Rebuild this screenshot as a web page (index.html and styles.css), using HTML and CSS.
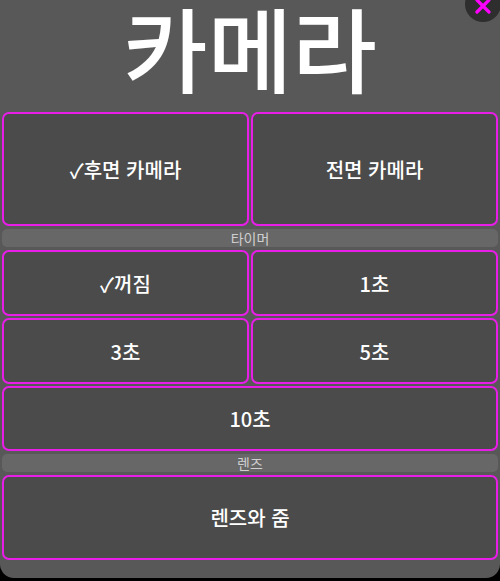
FILE: index.html
```html
<!DOCTYPE html>
<html lang="ko">
<head>
<meta charset="utf-8">
<link rel="stylesheet" href="styles.css">
</head>
<body>
<div class="panel">
  <div class="title">카메라</div>
  <button class="close" aria-label="닫기">
    <svg viewBox="0 0 16 16" width="16" height="16"><path d="M2 2 L14 14 M14 2 L2 14" stroke="#ff00ff" stroke-width="3.2" stroke-linecap="round" fill="none"/></svg>
  </button>
  <div class="row two tall">
    <div class="btn">✓후면 카메라</div>
    <div class="btn">전면 카메라</div>
  </div>
  <div class="header">타이머</div>
  <div class="timer">
    <div class="btn">✓꺼짐</div>
    <div class="btn">1초</div>
    <div class="btn">3초</div>
    <div class="btn">5초</div>
    <div class="btn wide">10초</div>
  </div>
  <div class="header">렌즈</div>
  <div class="btn lens">렌즈와 줌</div>
</div>
</body>
</html>
```
FILE: styles.css
```css
html, body {
  margin: 0;
  padding: 0;
  background: #000;
}
body {
  width: 500px;
  height: 581px;
  overflow: hidden;
  font-family: "Noto Sans CJK KR", "Noto Sans", "DejaVu Sans", sans-serif;
}
.panel {
  position: relative;
  width: 500px;
  height: 578px;
  box-sizing: border-box;
  background: #585858;
  border-radius: 0 0 14px 14px;
  padding: 0 2px;
  display: flex;
  flex-direction: column;
  gap: 3px;
}
.title {
  height: 109px;
  color: #fff;
  font-size: 92px;
  font-weight: 500;
  line-height: 92px;
  text-align: center;
}
.close {
  position: absolute;
  left: 465px;
  top: -14px;
  width: 36px;
  height: 36px;
  border-radius: 50%;
  border: none;
  background: #2e2e2e;
  padding: 0 0 8px 0;
  display: flex;
  align-items: flex-end;
  justify-content: center;
  box-sizing: border-box;
}
.row.two {
  display: grid;
  grid-template-columns: 1fr 1fr;
  gap: 2px;
}
.tall .btn {
  height: 114px;
}
.btn {
  box-sizing: border-box;
  border: 2px solid #e81ee8;
  border-radius: 7px;
  background: #4b4b4b;
  color: #fff;
  font-size: 20px;
  font-weight: 500;
  display: flex;
  align-items: center;
  justify-content: center;
}
.header {
  height: 18px;
  background: #676767;
  border-radius: 5px;
  color: #cfcfcf;
  font-size: 14px;
  line-height: 18px;
  text-align: center;
}
.timer {
  display: grid;
  grid-template-columns: 1fr 1fr;
  grid-template-rows: 66px 66px 65px;
  gap: 2px;
}
.timer .wide {
  grid-column: 1 / 3;
}
.lens {
  height: 85px;
}
```
